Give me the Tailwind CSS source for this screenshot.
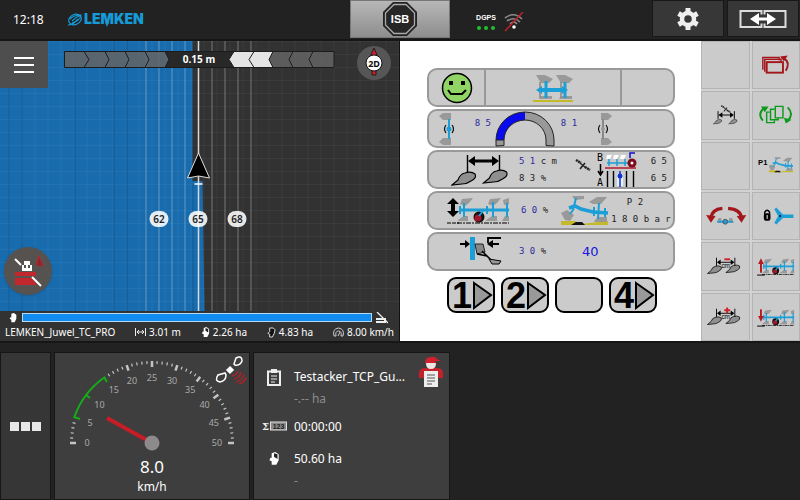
<!DOCTYPE html>
<html lang="en">
<head>
  <meta charset="UTF-8">
  <meta name="viewport" content="width=device-width, initial-scale=1.0">
  <title>LEMKEN Juwel TC PRO</title>
  <script src="https://cdn.jsdelivr.net/npm/@tailwindcss/browser@4"></script>
</head>
<body class="min-h-screen flex flex-col bg-[#222] text-white font-['Noto_Sans','Open_Sans',sans-serif]">

  <!-- Shared drawings -->
  <svg class="hidden">
    <symbol id="share" viewBox="0 0 26 15">
      <path d="M1 14L7 9Q9 3 14 2Q20 0 24 3Q26 7 20 10Q16 13 11 13Z" fill="#8f8f8f" stroke="#000" stroke-width="1.2"/>
    </symbol>
    <symbol id="frame" viewBox="0 0 52 28">
      <g fill="#999">
        <path d="M3 7L5 2L16 1L12 6L8 9ZM31 7L33 2L44 1L40 6L36 9ZM46 3L52 1V7L47 8Z"/>
        <path d="M1 23L7 19H11V24H1ZM28 24L35 19H40V24ZM45 24L48 19H52V24Z"/>
      </g>
      <path d="M3 13H52" stroke="#1c9ed6" stroke-width="3"/>
      <path d="M7 6V20M36 5V20M50 6V20M3 9V17M30 9V17" stroke="#1c9ed6" stroke-width="2"/>
      <circle cx="22" cy="20" r="5.5" fill="#111"/>
      <circle cx="21" cy="21" r="3.5" fill="#a3152a"/>
      <path d="M22 19L26 14" stroke="#1c9ed6" stroke-width="2"/>
      <path d="M0 26H52" stroke="#000" stroke-width="1.2" stroke-dasharray="5 1 2 1"/>
    </symbol>
    <symbol id="tilted" viewBox="0 0 48 34">
      <path d="M0 27H14L20 30L47 27V31H0Z" fill="#c4b928"/>
      <path d="M11 2H23V5L14 6ZM28 8L36 3H46L40 10H32ZM0 19L6 16L13 21L9 27L4 26ZM33 27L37 23H46V28H34Z" fill="#999"/>
      <path d="M8 14L14 12L20 15L32 18L47 19" fill="none" stroke="#1c9ed6" stroke-width="3.5"/>
      <path d="M15 4L12 16L9 20M38 9L37 25M33 13V22M44 14V23" fill="none" stroke="#1c9ed6" stroke-width="2"/>
      <path d="M10 31L15 28H21L24 31Z" fill="#111"/>
    </symbol>
    <symbol id="satellite" viewBox="0 0 16 15">
      <path d="M1 2L6 5M10 9L15 12" stroke="#222" stroke-width="2.500" stroke-dasharray="2 .5"/>
      <path d="M5 5L11 10" stroke="#222" stroke-width="1.3"/>
      <path d="M10 5L5 11" stroke="#222" stroke-width="1.6"/>
    </symbol>
    <symbol id="gap" viewBox="0 0 48 48">
      <use href="#share" x="5" y="24" width="17" height="10"/>
      <use href="#share" x="25" y="23" width="17" height="10"/>
      <path d="M15.500 16V25M35.500 16V25" stroke="#000" stroke-width="1"/>
      <path d="M16 21L20 18V24ZM35 21L31 18V24Z" fill="#000"/>
      <path d="M19 21H32" stroke="#000" stroke-width="1"/>
      <text x="25.500" y="27" text-anchor="middle" font-family="Liberation Sans" font-size="7">cm</text>
    </symbol>
    <symbol id="hand" viewBox="0 0 10 12">
      <path d="M3 1L6 0L9 2L9 7L7 11H3V8L1 7L2 5L3 5Z" fill="#fff"/>
    </symbol>
  </svg>

  <!-- Top bar -->
  <header class="h-[41px] shrink-0 grid grid-cols-[350px_1fr_148px] border-b-2 border-[#161616]">
    <div class="flex items-center pl-[13px] gap-[23px]">
      <time class="text-xs w-8">12:18</time>
      <svg class="w-20 h-5" viewBox="0 0 80 20" role="img" aria-label="LEMKEN">
        <g fill="none" stroke="#169bd7" stroke-width="1.2">
          <ellipse cx="7" cy="9.500" rx="6.500" ry="5" transform="rotate(-25 7 9.500)"/>
          <path d="M2 9Q6 5 13 5Q12 11 4 13M4 11Q8 7 13 5M0 15Q5 15 10 9"/>
        </g>
        <text x="16" y="14" font-family="Inter" font-size="14" font-weight="900" fill="#169bd7">LEMKEN</text>
        <path d="M37 12H41L39 17Z" fill="#169bd7"/>
      </svg>
    </div>
    <div class="flex">
      <button class="w-[100px] h-[38px] border border-[#777] bg-linear-to-b from-[#b8b8b8] to-[#8d8d8d] flex items-center justify-center" aria-label="ISB">
        <svg class="size-9" viewBox="0 0 36 36">
          <path d="M11 1H25L35 11V25L25 35H11L1 25V11Z" fill="#222"/>
          <path d="M12 3.500H24L32.500 12V24L24 32.500H12L3.500 24V12Z" fill="#262626" stroke="#aaa" stroke-width="1.3"/>
          <text x="18" y="21.500" text-anchor="middle" font-family="Liberation Sans" font-weight="700" font-size="11" fill="#fff">ISB</text>
        </svg>
      </button>
      <div class="flex items-center gap-2 pl-[26px] pt-1">
        <div class="flex flex-col items-center gap-[3px] w-5">
          <span class="text-[7px] leading-[10px] font-bold font-['Liberation_Sans',sans-serif]">DGPS</span>
          <span class="flex gap-[3px]">
            <i class="size-1 rounded-full bg-[#22c02e]"></i>
            <i class="size-1 rounded-full bg-[#22c02e]"></i>
            <i class="size-1 rounded-full bg-[#22c02e]"></i>
          </span>
        </div>
        <svg class="w-5 h-5" viewBox="0 0 20 20" fill="none">
          <path d="M1 6Q10 -1 18 7M3 9Q10 4 16 10M6 12Q10 8 13 12" stroke="#8a8a8a" stroke-width="1.6"/>
          <circle cx="10" cy="15" r="1.8" fill="#fff"/>
          <path d="M1 19L19 0" stroke="#cc1f26" stroke-width="1.4"/>
        </svg>
      </div>
    </div>
    <div class="grid grid-cols-2 gap-[3px] pr-px">
      <button class="h-[37px] bg-[#373737] border border-[#181818] flex items-center justify-center" aria-label="Settings">
        <svg class="size-[22px]" viewBox="0 0 22 22">
          <circle cx="11" cy="11" r="6" fill="none" stroke="#eee" stroke-width="4.500"/>
          <g stroke="#eee" stroke-width="5">
            <path d="M11 0V4M11 18V22"/>
            <path d="M1.500 5.500L5 7.500M17 14.500L20.500 16.500M1.500 16.500L5 14.500M17 7.500L20.500 5.500"/>
          </g>
        </svg>
      </button>
      <button class="h-[37px] bg-[#373737] border border-[#181818] flex items-center justify-center" aria-label="Swap views">
        <svg class="w-12 h-5" viewBox="0 0 48 20">
          <path d="M1.500 2H22.500V18H1.500ZM25.500 2H46.500V18H25.500Z" fill="none" stroke="#ddd" stroke-width="2"/>
          <path d="M18 10H30" stroke="#373737" stroke-width="9"/>
          <path d="M11 10L20 4V8.500H28V4L37 10L28 16V11.500H20V16Z" fill="#fff"/>
        </svg>
      </button>
    </div>
  </header>

  <main class="h-[300px] shrink-0 grid grid-cols-2">
    <!-- Field map -->
    <section class="flex flex-col bg-[#323232] border-r border-[#111]">
      <div class="relative h-[270px]">
        <svg class="w-full h-full" viewBox="0 0 400 270" preserveAspectRatio="xMidYMid slice">
          <defs>
            <pattern id="grid" width="13" height="13" patternUnits="userSpaceOnUse" x="9">
              <path d="M.5 0V13M0 .5H13" stroke="#fff" stroke-opacity=".04"/>
            </pattern>
          </defs>
          <rect width="400" height="270" fill="#323232"/>
          <path d="M0 0H193V140H203L205 270H0Z" fill="#186cae"/>
          <rect width="400" height="270" fill="url(#grid)"/>
          <path d="M9.500 0V270M22.500 0V270M75.500 0V270M114.500 0V270M127.500 0V270M193.500 143V270" stroke="#0d4c80" stroke-opacity=".6"/>
          <path d="M146.500 0V270M159.500 0V270M172.500 0V270M185.500 0V270M212.500 0V270M225.500 0V270M238.500 0V270M251.500 0V270" stroke="#ddd" stroke-opacity=".4"/>
          <path d="M199 0V270" stroke="#d9d9d9" stroke-width="1.5"/>
          <path d="M199 112L210 137L199 135L188 137Z" fill="#000" stroke="#ddd" stroke-width="1"/>
          <path d="M195 143H203" stroke="#fff" stroke-width="1.5"/>
          <g fill="#fff" fill-opacity=".88">
            <rect x="150" y="170" width="19" height="16" rx="8"/>
            <rect x="189" y="170" width="19" height="16" rx="8"/>
            <rect x="228" y="170" width="19" height="16" rx="8"/>
          </g>
          <g fill="#222" font-size="10" font-weight="600" text-anchor="middle">
            <text x="159.500" y="182">62</text>
            <text x="198.500" y="182">65</text>
            <text x="237.500" y="182">68</text>
          </g>
        </svg>
        <button class="absolute left-0 top-0 w-[48px] h-[47px] bg-[#4e4e4e] flex flex-col items-center justify-center gap-[5px]" aria-label="Menu">
          <i class="w-5 h-[2px] bg-white"></i>
          <i class="w-5 h-[2px] bg-white"></i>
          <i class="w-5 h-[2px] bg-white"></i>
        </button>
        <!-- Steering deviation -->
        <svg class="absolute left-16 top-[10px] w-[271px] h-[17px]" viewBox="0 0 271 17">
          <path d="M.5 .5H270V16.500H.5Z" fill="#646464" fill-opacity=".85"/>
          <path d="M101 .5H170L165 8.500L170 16.500H101L105 8.500Z" fill="#282828"/>
          <path d="M170 .5H209L205 8.500L209 16.500H170L165 8.500Z" fill="#e4e4e4"/>
          <path d="M.5 .5H270V16.500H.5ZM20 .5L25 8.500L20 16.500M41 .5L45 8.500L41 16.500M61 .5L65 8.500L61 16.500M81 .5L85 8.500L81 16.500M101 .5L105 8.500L101 16.500M170 .5L165 8.500L170 16.500M190 .5L185 8.500L190 16.500M209 .5L205 8.500L209 16.500M229 .5L225 8.500L229 16.500M249 .5L245 8.500L249 16.500" fill="none" stroke="#1c1c1c" stroke-width="1"/>
          <text x="135" y="12" text-anchor="middle" font-size="10" font-weight="700" fill="#fff">0.15 m</text>
        </svg>
        <button class="absolute right-[8px] top-[5px] size-[34px] rounded-full bg-[#565656] flex items-center justify-center" aria-label="2D view">
          <svg class="size-[34px]" viewBox="0 0 34 34">
            <path d="M17 2L21 11H13Z" fill="#c9202c" stroke="#111" stroke-width=".8"/>
            <path d="M15 24H19V29H15Z" fill="#c9202c" stroke="#111" stroke-width=".8"/>
            <circle cx="17" cy="17" r="8" fill="#fff" stroke="#111"/>
            <text x="17" y="20.500" text-anchor="middle" font-size="9" font-weight="700" fill="#111">2D</text>
          </svg>
        </button>
        <button class="absolute left-1 bottom-4 size-12 rounded-full bg-[#565250] flex items-center justify-center shadow" aria-label="Work recording">
          <svg class="size-12" viewBox="0 0 48 48">
            <path d="M11 25H32V29H11ZM11 31H28L33 38H11Z" fill="#c1272d"/>
            <path d="M32 18L35 9L39 19H35M32 18L34 12" fill="#8f262b" stroke="#b3272d"/>
            <path d="M11 12L17 18M28 30L37 39" stroke="#fff" stroke-width="2"/>
            <path d="M19 18V24M27 18V24" stroke="#fff" stroke-width="2"/>
            <path d="M20 14H26V18H24V21H26V24H20V21H22V18H20Z" fill="#fff"/>
          </svg>
        </button>
      </div>
      <div class="flex items-center gap-1 pl-2 pr-[11px] h-[13px]">
        <svg class="w-[10px] h-[10px]" viewBox="0 0 10 12"><use href="#hand"/></svg>
        <div class="flex-1 h-[9px] bg-[#118bee] border border-[#b8d9f2]"></div>
        <svg class="w-3 h-3" viewBox="0 0 12 12">
          <path d="M0 6H10V11H0Z" fill="#eee"/>
          <path d="M1 0L12 11M0 8H9" stroke="#eee" stroke-width="1.3"/>
          <path d="M0 8.500H8" stroke="#333"/>
        </svg>
      </div>
      <div class="flex-1 flex items-center justify-between px-[5px] pb-px text-[10px] leading-[13px] whitespace-nowrap">
        <span>LEMKEN_Juwel_TC_PRO</span>
        <span class="flex items-center gap-[3px]">
          <svg class="w-[11px] h-[10px]" viewBox="0 0 11 10" fill="none" stroke="#eee"><path d="M.5 1V9M10.500 1V9M2 5H9M4 3L2 5L4 7M7 3L9 5L7 7"/></svg>3.01 m
        </span>
        <span class="flex items-center gap-[3px]">
          <svg class="w-[9px] h-[11px]" viewBox="0 0 10 12"><use href="#hand"/><path d="M5 1L8 2V6L5 4Z" fill="#222"/></svg>2.26 ha
        </span>
        <span class="flex items-center gap-[3px]">
          <svg class="w-[9px] h-[11px]" viewBox="0 0 10 12"><path d="M3 1L7 1L9 3L8 7L6 11H3V8L1 7L3 5Z" fill="#111" stroke="#eee"/></svg>4.83 ha
        </span>
        <span class="flex items-center gap-[3px]">
          <svg class="w-[11px] h-[10px]" viewBox="0 0 11 10" fill="none" stroke="#ccc"><path d="M1 9Q-1 2 5.500 1Q12 2 10 9H8Q9 4 5.500 4Q2 4 3 9ZM5 9L7 5"/></svg>8.00 km/h
        </span>
      </div>
    </section>

    <!-- Plough terminal -->
    <section class="flex bg-white">
      <div class="flex-1 flex flex-col gap-[2px] pl-[27px] pr-[26px] pt-[27px] text-[9px] leading-[17px] text-[#222] font-['DejaVu_Sans_Mono',monospace]">
        <div class="h-[39px] shrink-0 rounded-[10px] border-2 border-[#999] bg-[#cbcbcb] grid grid-cols-[55px_1fr_51px]">
          <div class="flex items-center justify-center">
            <svg class="size-8" viewBox="0 0 32 32">
              <circle cx="16" cy="16" r="14.500" fill="#8fd464" stroke="#000" stroke-width="1.5"/>
              <path d="M8 9H12V13H8ZM20 9H24V13H20Z"/>
              <path d="M7 18L10 22H21L25 18" fill="none" stroke="#000" stroke-width="2"/>
            </svg>
          </div>
          <div class="flex items-center justify-center border-x-2 border-[#999]">
            <svg class="w-10 h-7" viewBox="0 0 40 28">
              <path d="M0 26H40V28H0Z" fill="#c4b928"/>
              <path d="M3 1H12L20 5L16 9H8ZM23 1H32L40 5L36 9H28ZM6 25L8 22H19V25ZM26 25L28 22H39V25Z" fill="#999"/>
              <path d="M7 8V24M28 8V24" stroke="#888" stroke-width="1.500"/>
              <path d="M13 7V24M32 8V24" stroke="#1c9ed6" stroke-width="3"/>
              <path d="M3 16L9 12V14H29V12L35 16L29 20V18H9V20Z" fill="#1c9ed6"/>
            </svg>
          </div>
        </div>

        <div class="h-[39px] shrink-0 rounded-[10px] border-2 border-[#999] bg-[#cbcbcb] grid grid-cols-[34px_32px_60px_28px_44px] items-start">
          <svg class="w-4 h-9 justify-self-center" viewBox="0 0 16 36">
            <path d="M1 5L5 2H13V9H5ZM1 31L5 27H13V34H5Z" fill="#999"/>
            <path d="M11 8V28" stroke="#1c9ed6" stroke-width="2"/>
            <path d="M8 14Q5 18 8 22M14 14Q17 18 14 22" fill="none" stroke="#111" stroke-width="1.2"/>
            <circle cx="11" cy="18" r="2.5" fill="#1c9ed6"/>
          </svg>
          <span class="pt-1 pr-1 text-right text-[#2a2aa0]">8 5</span>
          <svg class="w-[60px] h-9" viewBox="0 0 60 36">
            <path d="M1 35V29A29 28 0 0 1 59 29V35L51 34.500V29A21 20 0 0 0 9 29V34.500Z" fill="#999"/>
            <path d="M1 29A29 28 0 0 1 30 1V9A21 20 0 0 0 9 29Z" fill="#0a0aee"/>
            <path d="M1 35V29A29 28 0 0 1 59 29V35L51 34.500V29A21 20 0 0 0 9 29V34.500ZM1 29H9" fill="none" stroke="#222"/>
          </svg>
          <span class="pt-1 text-center text-[#2a2aa0]">8 1</span>
          <svg class="w-4 h-9 justify-self-center" viewBox="0 0 16 36">
            <path d="M4 2H11L15 5L11 9H4ZM4 27H11L15 31L11 34H4Z" fill="#999"/>
            <path d="M6 8V28" stroke="#888" stroke-width="2"/>
            <path d="M3 14Q0 18 3 22M9 14Q12 18 9 22" fill="none" stroke="#111" stroke-width="1.2"/>
            <circle cx="6" cy="18" r="2" fill="#999"/>
          </svg>
        </div>

        <div class="h-[39px] shrink-0 rounded-[10px] border-2 border-[#999] bg-[#cbcbcb] grid grid-cols-[84px_62px_22px_46px_24px] items-center">
          <svg class="w-[58px] h-[32px] justify-self-end mr-1" viewBox="0 0 58 32">
            <use href="#share" x="0" y="17" width="26" height="15"/>
            <use href="#share" x="31" y="15" width="27" height="15"/>
            <path d="M16.500 1V18M48.500 1V16" stroke="#000" stroke-width="1.4"/>
            <path d="M17 7L24 2V5.500H41V2L48 7L41 12V8.500H24V12Z"/>
          </svg>
          <div class="flex flex-col pl-[6px]">
            <span><b class="font-normal text-[#2a2aa0]">5 1</b> c m</span>
            <span>8 3 %</span>
          </div>
          <svg class="w-4 h-[15px] -mt-2" viewBox="0 0 16 15"><use href="#satellite"/></svg>
          <svg class="w-[44px] h-[35px]" viewBox="0 0 44 35">
            <g font-family="DejaVu Sans Mono" font-size="10"><text x="0" y="9">B</text><text x="0" y="34">A</text></g>
            <path d="M3.500 12V22M1 19L3.500 23L6 19" fill="none" stroke="#000" stroke-width="1.5"/>
            <path d="M10 3H15L13 7H9ZM17 3H22L20 7H16ZM24 3H29L27 7H23Z" fill="#fff"/>
            <path d="M10 11H34M12 7V14M20 7V14M28 7V14" stroke="#1c9ed6" stroke-width="1.500"/>
            <path d="M8 16H39" stroke="#b51a2e" stroke-width="1.5"/>
            <circle cx="35" cy="11" r="4.500" fill="#7c0c1c"/><circle cx="35" cy="11" r="1.5" fill="#fff"/>
            <path d="M33 6V1H38" fill="none" stroke="#11c" stroke-width="1.5"/>
            <path d="M20 22H26V34H20Z" fill="#e8f2ff"/>
            <path d="M10.500 19V35M16.500 19V35M29.500 19V35M36.500 19V35" stroke="#000" stroke-width="1.4"/>
            <path d="M23 19V35" stroke="#1133cc" stroke-width="1.500"/>
            <circle cx="23" cy="24" r="2.500" fill="#1133cc"/>
          </svg>
          <div class="flex flex-col items-end">
            <span>6 5</span>
            <span>6 5</span>
          </div>
        </div>

        <div class="h-[39px] shrink-0 rounded-[10px] border-2 border-[#999] bg-[#cbcbcb] grid grid-cols-[84px_48px_48px_1fr] items-center">
          <svg class="w-[62px] h-7 justify-self-end mr-1" viewBox="0 0 62 28">
            <use href="#frame" x="10" y="0" width="52" height="28"/>
            <path d="M0 26H12" stroke="#000" stroke-dasharray="4 1"/>
            <path d="M6 1L12 7H8V14H12L6 20L0 14H4V7H0Z"/>
          </svg>
          <span class="pl-2"><b class="font-normal text-[#2a2aa0]">6 0</b> %</span>
          <svg class="w-12 h-[34px]" viewBox="0 0 48 34"><use href="#tilted"/></svg>
          <div class="flex flex-col items-center whitespace-nowrap">
            <span class="pr-3">P 2</span>
            <span>1 8 0 b a r</span>
          </div>
        </div>

        <div class="h-[39px] shrink-0 rounded-[10px] border-2 border-[#999] bg-[#cbcbcb] grid grid-cols-[84px_60px_60px] items-center">
          <svg class="w-[42px] h-[31px] justify-self-center ml-[20px]" viewBox="0 0 42 31">
            <path d="M10 1H15V24H10Z" fill="#1c9ed6"/>
            <path d="M15 8H23L25 16L17 18Z" fill="#888" stroke="#222"/>
            <path d="M22 15L31 24M17 18L27 20L33 26" fill="none" stroke="#000" stroke-width="1.5"/>
            <path d="M29 23L41 25L39 28L32 28Z" fill="#999" stroke="#000"/>
            <path d="M0 8H6M32 8H39M28 7V2H41" fill="none" stroke="#000" stroke-width="1.8"/>
            <path d="M5 4L10 8L5 12ZM33 4L27 8L33 12Z"/>
          </svg>
          <span class="pl-[6px]"><b class="font-normal text-[#2a2aa0]">3 0</b> %</span>
          <span class="pl-[9px] text-[13px] text-[#1515dd] font-['DejaVu_Sans',sans-serif]">40</span>
        </div>

        <div class="flex gap-[6px] pl-5 pt-1">
          <button class="w-12 h-9 rounded-[9px] border-2 border-black bg-[#cbcbcb]" aria-label="1">
            <svg class="w-11 h-8 overflow-visible" viewBox="0 0 44 32"><text x="3" y="29" font-family="Liberation Sans Narrow, Liberation Sans" font-weight="700" font-size="36">1</text><path d="M25 4L42 16L25 29Z" fill="#999" stroke="#000" stroke-width="2"/></svg>
          </button>
          <button class="w-12 h-9 rounded-[9px] border-2 border-black bg-[#cbcbcb]" aria-label="2">
            <svg class="w-11 h-8 overflow-visible" viewBox="0 0 44 32"><text x="3" y="29" font-family="Liberation Sans Narrow, Liberation Sans" font-weight="700" font-size="36">2</text><path d="M25 4L42 16L25 29Z" fill="#999" stroke="#000" stroke-width="2"/></svg>
          </button>
          <button class="w-12 h-9 rounded-[9px] border-2 border-black bg-[#cbcbcb]" aria-label="3"></button>
          <button class="w-12 h-9 rounded-[9px] border-2 border-black bg-[#cbcbcb]" aria-label="4">
            <svg class="w-11 h-8 overflow-visible" viewBox="0 0 44 32"><text x="3" y="29" font-family="Liberation Sans Narrow, Liberation Sans" font-weight="700" font-size="36">4</text><path d="M25 4L42 16L25 29Z" fill="#999" stroke="#000" stroke-width="2"/></svg>
          </button>
        </div>
      </div>

      <!-- Soft keys -->
      <div class="w-[99px] grid grid-cols-2 grid-rows-6 gap-[2px] bg-[#d2d2d2]">
        <button class="bg-[#cbcbcb] border border-[#b4b4b4]" aria-label="Empty"></button>
        <button class="bg-[#cbcbcb] border border-[#b4b4b4]" aria-label="Change view">
          <svg class="w-full h-11" viewBox="1 1 46 46" fill="none" stroke="#a3161c" stroke-width="1.5">
            <path d="M10 29V16H27V19M12 31V18H29V21" />
            <rect x="14" y="21" width="17" height="11" stroke-width="2"/>
            <path d="M32 17Q39 21 34 30" stroke-width="2"/>
            <path d="M28 15L36 14L32 20Z" fill="#a3161c" stroke="none"/>
          </svg>
        </button>
        <button class="bg-[#cbcbcb] border border-[#b4b4b4]" aria-label="GPS working width">
          <svg class="w-full h-11" viewBox="1 1 46 46">
            <use href="#share" x="11" y="28" width="10" height="6"/>
            <use href="#share" x="27" y="28" width="10" height="6"/>
            <path d="M16.500 20V28M33.500 20V28M18 24H31" stroke="#000"/>
            <path d="M17 24L21 21V27ZM33 24L29 21V27Z"/>
            <use href="#satellite" x="19" y="13" width="11" height="10"/>
          </svg>
        </button>
        <button class="bg-[#cbcbcb] border border-[#b4b4b4]" aria-label="Next page">
          <svg class="w-full h-11" viewBox="1 1 46 46" fill="none" stroke="#0d9a1c" stroke-width="1.5">
            <path d="M23 15H31V27H23ZM22 18H18V29H26V27M17 21H14V32H22V30"/>
            <path d="M10 30Q4 23 11 17M36 16Q43 23 36 30" stroke-width="2"/>
            <path d="M8 15H16L12 21ZM32 27L34 33L40 29Z" fill="#0d9a1c" stroke="none"/>
          </svg>
        </button>
        <button class="bg-[#cbcbcb] border border-[#b4b4b4]" aria-label="Empty"></button>
        <button class="bg-[#cbcbcb] border border-[#b4b4b4]" aria-label="Program P1">
          <svg class="w-full h-11" viewBox="1 1 46 46">
            <use href="#tilted" x="16" y="12" width="26" height="22"/>
            <text x="5" y="23" font-family="Liberation Sans" font-size="8" font-weight="700">P1</text>
          </svg>
        </button>
        <button class="bg-[#cbcbcb] border border-[#b4b4b4]" aria-label="Turn plough">
          <svg class="w-full h-11" viewBox="1 1 46 46">
            <path d="M21 16Q10 17 9 26M27 16Q40 17 41 26" fill="none" stroke="#a3161c" stroke-width="3.500"/>
            <path d="M4 23L14 24L9 31ZM46 23L36 24L41 31Z" fill="#a3161c"/>
            <path d="M15 31L17 26H20V31ZM28 31V26H31L33 31Z" fill="#999"/>
            <path d="M16 30H32" stroke="#1c9ed6" stroke-width="2"/>
            <circle cx="24" cy="30" r="2.500" fill="#1c9ed6" stroke="#555"/>
          </svg>
        </button>
        <button class="bg-[#cbcbcb] border border-[#b4b4b4]" aria-label="Lock hitch">
          <svg class="w-full h-11" viewBox="1 1 46 46">
            <path d="M12 23V20Q14.500 16 17 20V23" fill="none" stroke="#000" stroke-width="1.5"/>
            <rect x="11" y="21" width="7" height="8" rx="3"/>
            <path d="M14.500 23V27" stroke="#fff"/>
            <path d="M42 22.500V26H31L24 33L22 31L26 24L22 17L24 15L31 22.500Z" fill="#1c9ed6"/>
            <circle cx="28" cy="24" r="1" fill="#000"/>
          </svg>
        </button>
        <button class="bg-[#cbcbcb] border border-[#b4b4b4]" aria-label="Reduce working width">
          <svg class="w-full h-11" viewBox="1 1 46 46">
            <use href="#gap"/>
            <path d="M23 17H29" stroke="#d0202a" stroke-width="2"/>
          </svg>
        </button>
        <button class="bg-[#cbcbcb] border border-[#b4b4b4]" aria-label="Raise plough">
          <svg class="w-full h-11" viewBox="1 1 46 46">
            <use href="#frame" x="9" y="15" width="34" height="20"/>
            <path d="M8 31V21" stroke="#b51a20" stroke-width="2"/>
            <path d="M5 22L8 16L11 22Z" fill="#b51a20"/>
            <path d="M4 33.500H12" stroke="#000"/>
          </svg>
        </button>
        <button class="bg-[#cbcbcb] border border-[#b4b4b4]" aria-label="Increase working width">
          <svg class="w-full h-11" viewBox="1 1 46 46">
            <use href="#gap"/>
            <path d="M23 17H29M26 14V20" stroke="#d0202a" stroke-width="2"/>
          </svg>
        </button>
        <button class="bg-[#cbcbcb] border border-[#b4b4b4]" aria-label="Lower plough">
          <svg class="w-full h-11" viewBox="1 1 46 46">
            <use href="#frame" x="9" y="15" width="34" height="20"/>
            <path d="M8 16V25" stroke="#b51a20" stroke-width="2"/>
            <path d="M5 23L8 29L11 23Z" fill="#b51a20"/>
            <path d="M4 33.500H12" stroke="#000"/>
          </svg>
        </button>
      </div>
    </section>
  </main>

  <!-- Info tiles -->
  <footer class="flex-1 flex gap-[3px] pt-[9px] pb-px border-t-2 border-[#161616]">
    <button class="w-[51px] bg-[#363636] border border-[#161616] flex items-center justify-center gap-[2px]" aria-label="More">
      <i class="size-[9px] bg-[#e8e8e8]"></i>
      <i class="size-[9px] bg-[#e8e8e8]"></i>
      <i class="size-[9px] bg-[#e8e8e8]"></i>
    </button>

    <section class="w-[196px] bg-[#3e3e3e] border border-[#161616]">
      <svg class="w-[194px] h-[146px]" viewBox="0 0 194 146">
        <g id="ticks"></g>
        <path d="M19 65A82 82 0 0 1 50 24" fill="none" stroke="#14ad18" stroke-width="2"/>
        <path d="M19 64L25 66M31 42L35 45M49 24L52 29" stroke="#14ad18" stroke-width="2"/>
        <path d="M52 65L97 90" stroke="#c61d26" stroke-width="4"/>
        <circle cx="97" cy="90" r="7.500" fill="#8c8a8a"/>
        <text x="97" y="120" text-anchor="middle" font-size="17" fill="#fff">8.0</text>
        <text x="97" y="138" text-anchor="middle" font-size="12" fill="#fff">km/h</text>
        <g stroke="#fff" stroke-width="1.500" fill="none">
          <path d="M179 11L181 5Q187 2 187 8Q185 13 180 12ZM170 20L163 22Q159 28 165 29Q171 28 171 22Z"/>
          <path d="M173 15L177 19" stroke-width="6"/>
        </g>
        <path d="M177 23Q182 22 183 18M179 26Q185 25 186 19M181 29Q188 27 189 21M184 31Q190 29 191 24" fill="none" stroke="#a8242a" stroke-width="1.500"/>
      </svg>
    </section>

    <section class="w-[197px] flex bg-[#3e3e3e] border border-[#161616] text-xs">
      <div class="w-10 grid grid-rows-[48px_50px_16px] content-start items-center justify-items-center">
        <svg class="w-[14px] h-[17px]" viewBox="0 0 14 17">
          <path d="M1 2.500H13V16H1Z" fill="none" stroke="#eee" stroke-width="2"/>
          <path d="M4 0H10V4H4Z" fill="#eee"/>
          <path d="M4 7H10M4 10H10M4 13H8" stroke="#eee" stroke-width="1.200"/>
        </svg>
        <svg class="w-[25px] h-3" viewBox="0 0 25 12">
          <text x="0" y="10" font-family="DejaVu Serif" font-size="10" font-weight="700" fill="#eee">Σ</text>
          <rect x="8.500" y="2" width="16" height="8" fill="#888" stroke="#ddd"/>
          <text x="16.500" y="9" text-anchor="middle" font-family="Liberation Sans" font-size="7" font-weight="700" fill="#222">123</text>
        </svg>
        <svg class="w-3 h-[14px]" viewBox="0 0 10 12"><use href="#hand"/><path d="M5 1L8 2V6L5 4Z" fill="#222"/></svg>
      </div>
      <div class="flex flex-col pt-4">
        <h2 class="leading-4">Testacker_TCP_Gu...</h2>
        <p class="pt-[6px] leading-4 text-[#8b8b8b]">-.-- ha</p>
        <p class="pt-3 leading-4">00:00:00</p>
        <p class="pt-4 leading-4">50.60 ha</p>
        <p class="pt-[6px] leading-4 text-[#8b8b8b]">-</p>
      </div>
      <svg class="w-[26px] h-8 mt-[3px] ml-auto mr-[5px] shrink-0" viewBox="0 0 26 32">
        <path d="M1 22V16Q2 12 8 12H19Q25 12 25 17V22Z" fill="#c1222b"/>
        <path d="M8 7H18Q18 13 13 13Q8 13 8 7Z" fill="#f2e6e2"/>
        <path d="M7 7Q7 1 13 1Q18 0 19 3L23 5H17L18 7Z" fill="#d0222b"/>
        <path d="M6 15H20V31H6Z" fill="#eee"/>
        <path d="M9 19H17M9 22H17M9 25H17M9 28H14" stroke="#555" stroke-width="1.200"/>
      </svg>
    </section>
  </footer>

  <script>
    // Speedometer scale, 0 to 50 km/h over a half circle
    const ticks = document.getElementById('ticks');
    let scale = '';
    for (let v = 0; v <= 50; v++) {
      const a = Math.PI * v / 50;
      const major = v % 5 === 0;
      const x = r => 97 - r * Math.cos(a);
      const y = r => 90 - r * Math.sin(a);
      if (v < 5 || v > 15) {
        const inner = major ? 76 : 79;
        scale += `<line x1="${x(inner)}" y1="${y(inner)}" x2="${x(82)}" y2="${y(82)}" stroke="#c4c4c4" stroke-width="${major ? 2.5 : 1.2}"/>`;
      }
      if (major) {
        scale += `<text x="${x(65)}" y="${y(65) + 3}" text-anchor="middle" font-size="9" fill="#aaa">${v}</text>`;
      }
    }
    ticks.innerHTML = scale;
  </script>
</body>
</html>
